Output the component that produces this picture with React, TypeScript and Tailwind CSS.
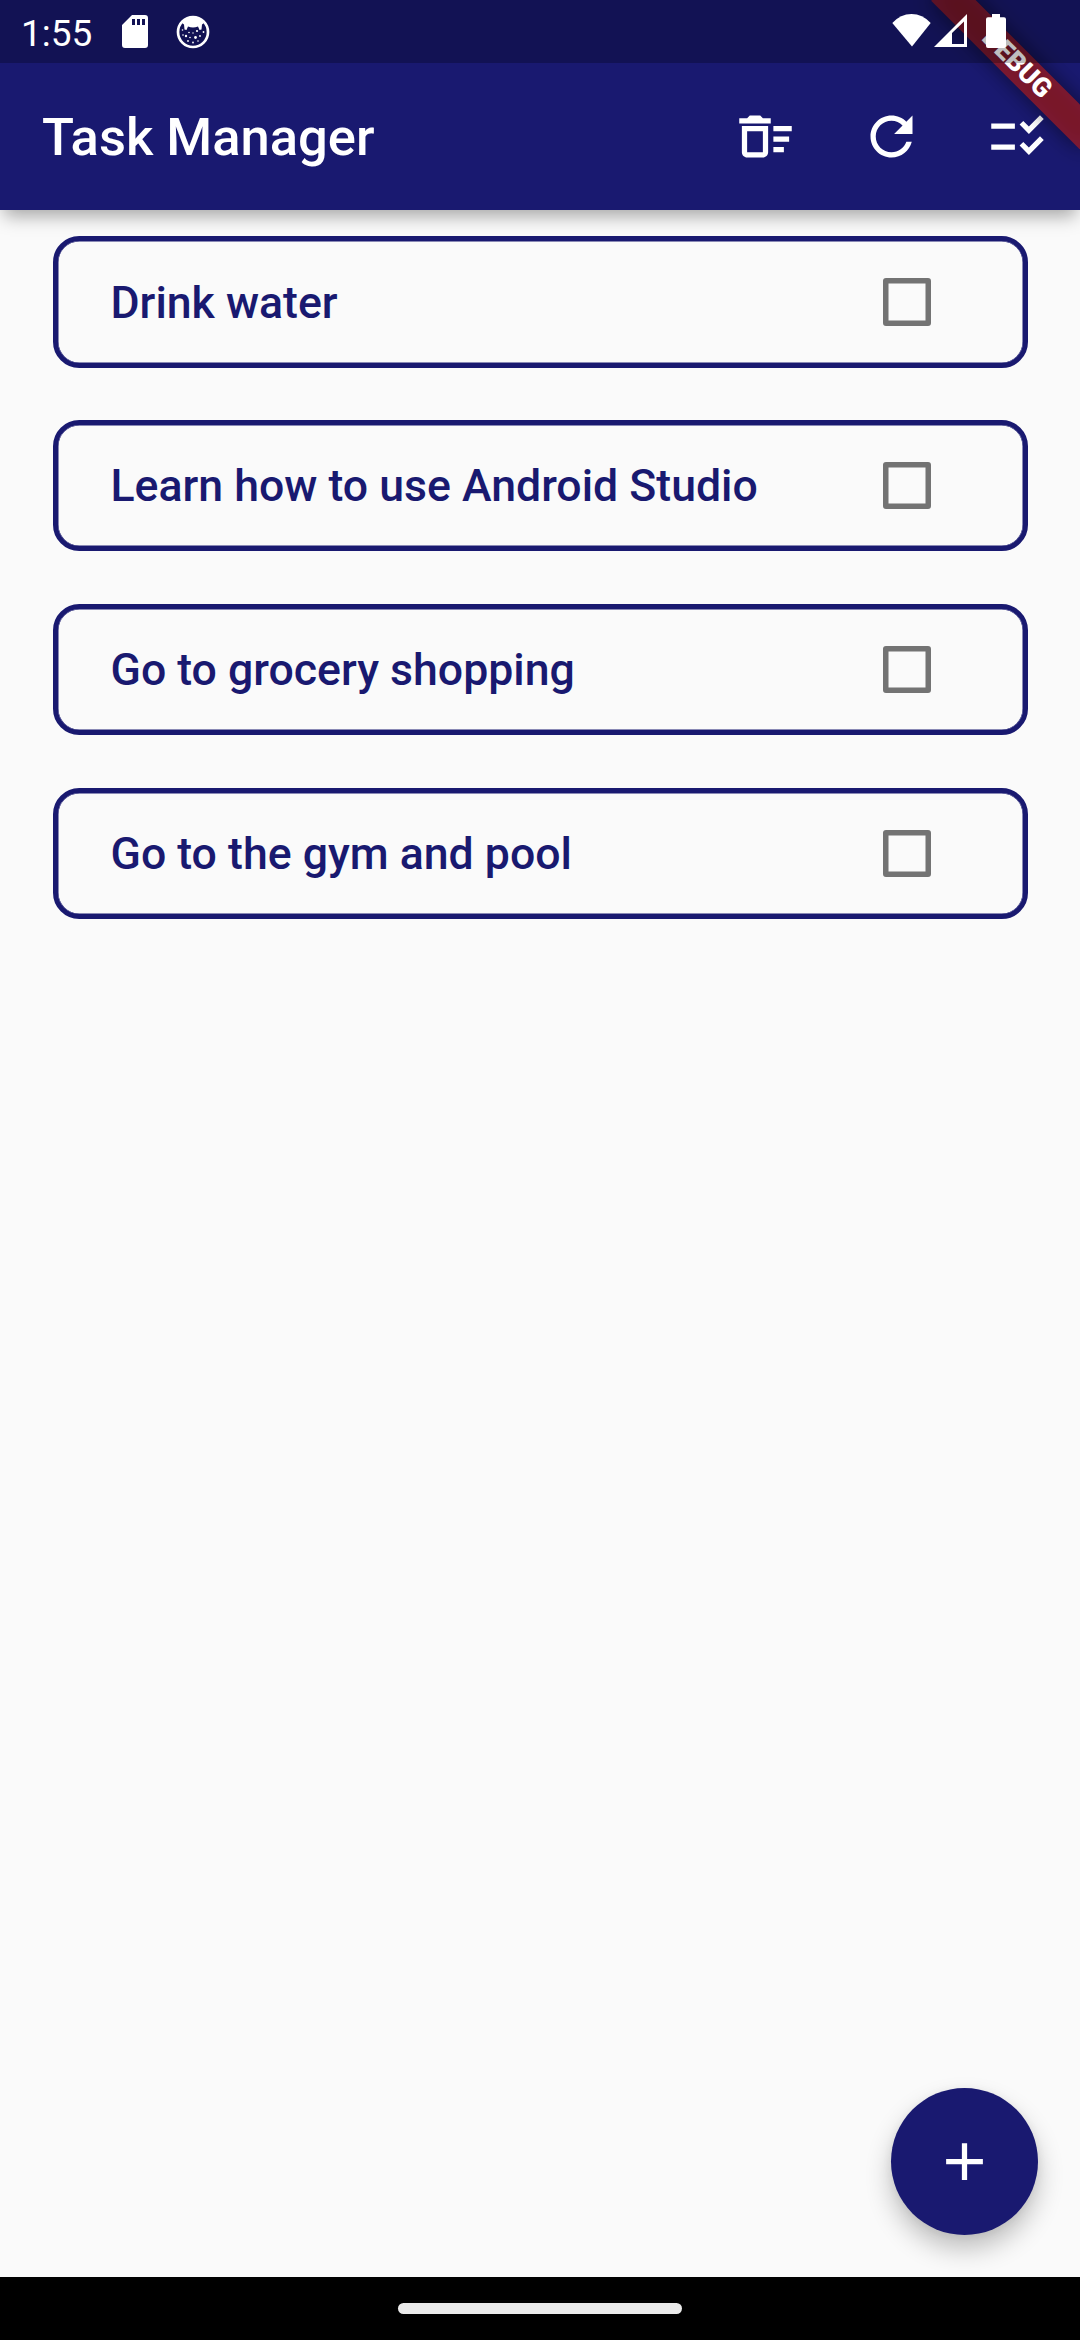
import React, { useState } from "react";

const initialTasks = [
  "Drink water",
  "Learn how to use Android Studio",
  "Go to grocery shopping",
  "Go to the gym and pool",
];

function Icon({ d }: { d: string }) {
  return (
    <svg viewBox="0 0 24 24" className="size-[63px]" fill="currentColor" aria-hidden="true">
      <path d={d} />
    </svg>
  );
}

const deleteSweep =
  "M15 16h4v2h-4zm0-8h7v2h-7zm0 4h6v2h-6zM3 18c0 1.1.9 2 2 2h6c1.1 0 2-.9 2-2V8H3v10zm2-8h6v8H5v-8zm5-6H6L5 5H2v2h12V5h-3z";
const refresh =
  "M17.65 6.35C16.2 4.9 14.21 4 12 4c-4.42 0-7.99 3.58-7.99 8s3.57 8 7.99 8c3.73 0 6.84-2.55 7.73-6h-2.08c-.82 2.33-3.04 4-5.65 4-3.31 0-6-2.69-6-6s2.69-6 6-6c1.66 0 3.14.69 4.22 1.78L13 11h7V4l-2.35 2.35z";
const checklist =
  "M11 7H2v2h9V7zm0 8H2v2h9v-2zm5.34-4l-3.54-3.54 1.41-1.41 2.12 2.12 4.24-4.24L22 5.34 16.34 11zm0 8l-3.54-3.54 1.41-1.41 2.12 2.12 4.24-4.24L22 13.34 16.34 19z";
const add = "M19 13h-6v6h-2v-6H5v-2h6V5h2v6h6v2z";

function StatusBar() {
  return (
    <div className="relative z-20 flex h-[63px] items-start bg-black/25 text-white">
      <span className="ml-[21px] mt-[12px] text-[37px] leading-[43px]">1:55</span>
      <svg viewBox="0 0 26 33" className="ml-[30px] mt-[15px] h-[33px] w-[26px]" fill="currentColor">
        <path
          fillRule="evenodd"
          d="M10 0h13a3 3 0 0 1 3 3v27a3 3 0 0 1-3 3H3a3 3 0 0 1-3-3V10zM10 4v6h3V4zm5 0v6h3V4zm5 0v6h3V4z"
        />
      </svg>
      <svg viewBox="0 0 34 34" className="ml-[28px] mt-[14.5px] size-[34px]">
        <circle cx="17" cy="17" r="15" fill="none" stroke="currentColor" strokeWidth="2.7" />
        <path
          d="M6 8Q8 2 17 2T28 8L26 9.500 25.500 14.500 23.500 15 22 11.500Q17 13.500 12 11.500L10.500 15 8.500 14.500 8 9.500z"
          fill="currentColor"
        />
        <g fill="currentColor">
          <circle cx="6.500" cy="15" r=".8" />
          <circle cx="7" cy="20" r=".8" />
          <circle cx="10" cy="21" r="1.200" />
          <circle cx="14" cy="22.500" r=".8" />
          <circle cx="19.500" cy="22.500" r="1.400" />
          <circle cx="24" cy="21" r=".9" />
          <circle cx="21" cy="16" r="1.100" />
          <circle cx="27.500" cy="17" r=".9" />
          <circle cx="13" cy="17.500" r=".8" />
          <circle cx="17" cy="18" r=".7" />
          <circle cx="17" cy="27.500" r=".9" />
          <circle cx="12" cy="26" r=".9" />
          <circle cx="22" cy="26" r=".8" />
        </g>
      </svg>
      <div className="ml-auto mr-[74px] flex">
        <svg viewBox="0 0 40 34" className="mt-[14px] h-[34px] w-[40px]" fill="currentColor">
          <path d="M20 32.500L.3 9Q8.500 0 19.500 0T38.700 9z" />
        </svg>
        <svg viewBox="0 0 34 34" className="ml-[2px] mt-[14px] size-[34px]" fill="currentColor">
          <path fillRule="evenodd" d="M0 33L33 0V33zM18 19V30H30V7.500z" />
        </svg>
        <svg viewBox="0 0 20 34" className="ml-[18px] mt-[14px] h-[34px] w-[20px]" fill="currentColor">
          <path d="M6 0h8v3.300h4a2 2 0 0 1 2 2V32a2 2 0 0 1-2 2H2a2 2 0 0 1-2-2V5.300a2 2 0 0 1 2-2h4z" />
        </svg>
      </div>
    </div>
  );
}

function DebugBanner() {
  return (
    <div className="pointer-events-none absolute inset-0 z-10 overflow-hidden">
      <div className="absolute -right-[105px] top-[73.5px] h-[31.5px] w-[210px] origin-[105px_-73.5px] rotate-45">
        <div className="absolute inset-0 bg-black/50 blur-[10.4px]" />
        <div className="relative flex h-full items-center justify-center bg-[#b71c1c]/63 text-[26.775px] leading-none font-black text-white">
          DEBUG
        </div>
      </div>
    </div>
  );
}

export default function App() {
  const [done, setDone] = useState<number[]>([]);
  const toggle = (i: number) =>
    setDone((d) => (d.includes(i) ? d.filter((x) => x !== i) : [...d, i]));

  return (
    <div className="relative flex h-[2340px] w-[1080px] flex-col overflow-hidden bg-[#fafafa] font-['Roboto',sans-serif]">
      <header className="h-[210px] bg-[#191970] text-white shadow-[0_10px_17px_-4px_rgba(0,0,0,0.34)]">
        <StatusBar />
        <div className="flex h-[147px] items-center pl-[42px]">
          <h1 className="pt-[2px] text-[52.5px] leading-none font-medium">Task Manager</h1>
          <nav className="ml-auto flex">
            {[deleteSweep, refresh, checklist].map((d) => (
              <button key={d} className="flex size-[126px] items-center justify-center">
                <Icon d={d} />
              </button>
            ))}
          </nav>
        </div>
      </header>
      <DebugBanner />

      <main className="flex flex-1 flex-col gap-[52.5px] px-[52.5px] pt-[26.25px]">
        {initialTasks.map((task, i) => (
          <div
            key={task}
            className="flex h-[131.25px] items-center rounded-[26.25px] border-[5px] border-[#191970] pr-[92px] pl-[53px] text-[#191970] shadow-[inset_0_0_0_0.5px_#191970]"
          >
            <span className="pt-[2px] text-[44.625px] leading-none font-medium">{task}</span>
            <button
              role="checkbox"
              aria-checked={done.includes(i)}
              aria-label={task}
              onClick={() => toggle(i)}
              className="ml-auto size-[47.25px] rounded-[3px] border-[5px] border-[#737373] shadow-[inset_0_0_0_0.5px_#737373] aria-checked:bg-[#191970]"
            />
          </div>
        ))}
      </main>

      <button
        aria-label="Add task"
        className="absolute right-[42px] bottom-[105px] flex size-[147px] items-center justify-center rounded-full bg-[#191970] text-white shadow-[0_14px_26px_rgba(0,0,0,0.24),0_2px_10px_rgba(0,0,0,0.06)]"
      >
        <Icon d={add} />
      </button>

      <footer className="flex h-[63px] justify-center bg-black pt-[26px]">
        <div className="h-[11px] w-[284px] rounded-full bg-[#ebebeb]" />
      </footer>
    </div>
  );
}
